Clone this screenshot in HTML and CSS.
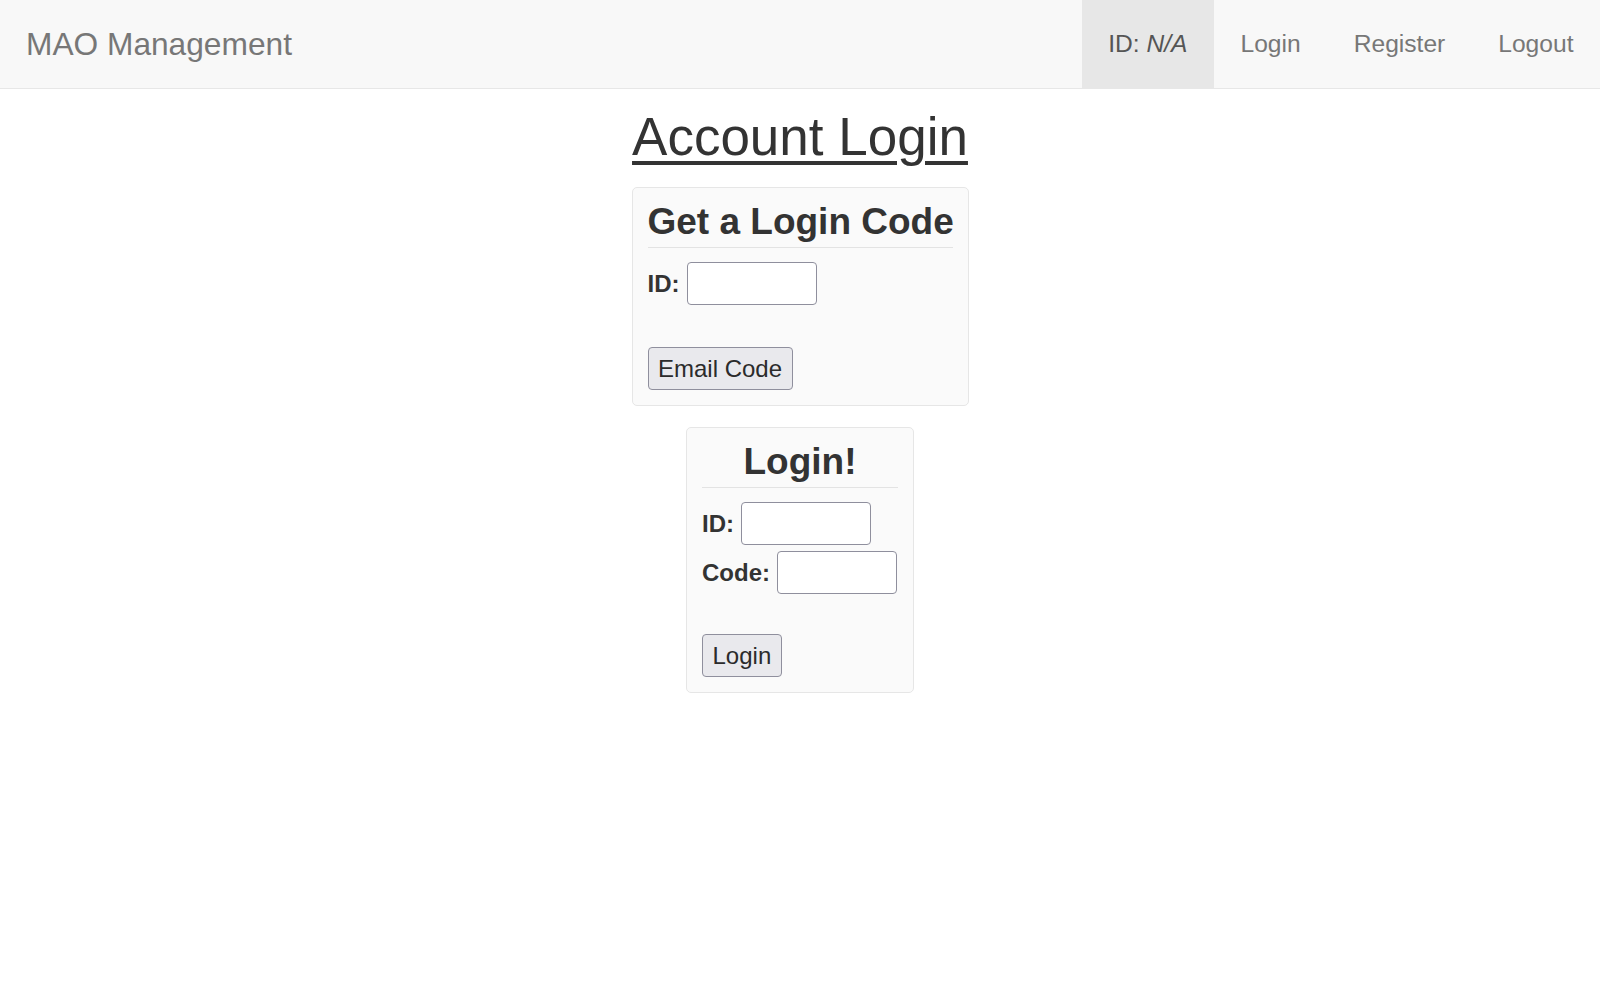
FILE: index.html
```html
<!DOCTYPE html>
<html lang="en">
<head>
<meta charset="utf-8">
<title>MAO Management - Account Login</title>
<link rel="stylesheet" href="styles.css">
</head>
<body>
<nav class="navbar">
  <a class="brand" href="#">MAO Management</a>
  <ul class="nav">
    <li class="nav-item active"><span>ID: <em>N/A</em></span></li>
    <li class="nav-item"><a href="#">Login</a></li>
    <li class="nav-item"><a href="#">Register</a></li>
    <li class="nav-item"><a href="#">Logout</a></li>
  </ul>
</nav>
<main class="main">
  <h1 class="page-title">Account Login</h1>
  <form class="card card-code">
    <h2 class="card-title">Get a Login Code</h2>
    <div class="field">
      <label class="label" for="code-id">ID:</label>
      <input class="input" id="code-id" type="text">
    </div>
    <button class="btn btn-first" type="button">Email Code</button>
  </form>
  <form class="card card-login">
    <h2 class="card-title">Login!</h2>
    <div class="field">
      <label class="label" for="login-id">ID:</label>
      <input class="input" id="login-id" type="text">
    </div>
    <div class="field field-next">
      <label class="label" for="login-code">Code:</label>
      <input class="input input-short" id="login-code" type="text">
    </div>
    <button class="btn btn-second" type="button">Login</button>
  </form>
</main>
</body>
</html>
```
FILE: styles.css
```css
* {
  box-sizing: border-box;
}

html, body {
  margin: 0;
  padding: 0;
  background: #ffffff;
}

body {
  font-family: "Liberation Sans", Arial, Helvetica, sans-serif;
  color: #333333;
}

.navbar {
  display: flex;
  justify-content: space-between;
  align-items: stretch;
  height: 89px;
  background: #f8f8f8;
  border-bottom: 1px solid #e7e7e7;
  padding: 0 0 0 26px;
}

.brand {
  display: flex;
  align-items: center;
  font-size: 31.7px;
  color: #777777;
  text-decoration: none;
}

.nav {
  display: flex;
  list-style: none;
  margin: 0;
  padding: 0;
}

.nav-item {
  display: flex;
  align-items: center;
  padding: 0 26.5px;
  font-size: 24.6px;
}

.nav-item a {
  color: #777777;
  text-decoration: none;
}

.nav-item.active {
  background: #e7e7e7;
  color: #555555;
}

.main {
  display: flex;
  flex-direction: column;
  align-items: center;
}

.page-title {
  margin: 18px 0 20px;
  font-size: 53px;
  line-height: 60px;
  font-weight: normal;
  text-decoration: underline;
  text-decoration-thickness: 4px;
  text-underline-offset: 6px;
}

.card {
  display: flex;
  flex-direction: column;
  align-items: flex-start;
  background: #fafafa;
  border: 1px solid #e6e6e6;
  border-radius: 5px;
  padding: 14px 15px 15px;
}

.card-code {
  width: 337px;
}

.card-login {
  width: 228px;
  margin-top: 21px;
}

.card-title {
  align-self: stretch;
  margin: 0 0 14px;
  padding-bottom: 5px;
  border-bottom: 1px solid #e3e3e3;
  font-size: 37px;
  line-height: 40px;
  font-weight: bold;
  text-align: center;
  white-space: nowrap;
}

.field {
  display: flex;
  align-items: center;
  gap: 7px;
}

.field-next {
  margin-top: 6px;
}

.label {
  font-size: 24px;
  font-weight: bold;
}

.input {
  width: 130px;
  height: 43px;
  background: #ffffff;
  border: 1px solid #8f8f9d;
  border-radius: 4px;
  font-size: 24px;
  font-family: inherit;
  padding: 2px 4px;
}

.input-short {
  width: 120px;
}

.btn {
  height: 43px;
  padding: 0 9.5px;
  background: #e9e9ed;
  border: 1px solid #8f8f9d;
  border-radius: 4px;
  font-family: inherit;
  font-size: 24px;
  color: #2b2b2b;
}

.btn-first {
  margin-top: 42px;
}

.btn-second {
  margin-top: 40px;
}
```
